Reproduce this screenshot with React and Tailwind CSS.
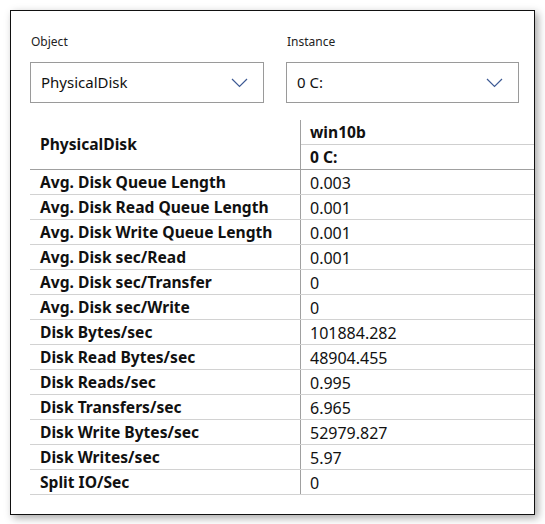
import { useState } from 'react';

const rows = [
  ['Avg. Disk Queue Length', '0.003'],
  ['Avg. Disk Read Queue Length', '0.001'],
  ['Avg. Disk Write Queue Length', '0.001'],
  ['Avg. Disk sec/Read', '0.001'],
  ['Avg. Disk sec/Transfer', '0'],
  ['Avg. Disk sec/Write', '0'],
  ['Disk Bytes/sec', '101884.282'],
  ['Disk Read Bytes/sec', '48904.455'],
  ['Disk Reads/sec', '0.995'],
  ['Disk Transfers/sec', '6.965'],
  ['Disk Write Bytes/sec', '52979.827'],
  ['Disk Writes/sec', '5.97'],
  ['Split IO/Sec', '0'],
];

function Chevron() {
  return (
    <svg width="17" height="10" viewBox="0 0 17 10" fill="none">
      <path d="M1 1 L8.5 8.5 L16 1" stroke="#3d5a94" strokeWidth="1.2" />
    </svg>
  );
}

function Picker({ label, value }) {
  return (
    <div className="flex flex-col">
      <div className="h-[22px] pl-px text-[12px] leading-[22px] text-[#222]">{label}</div>
      <div className="mt-[9px] h-[41px] border border-[#9a9a9a] flex items-center justify-between pl-[10px] pr-[15px]">
        <span className="text-[15px] text-[#111]">{value}</span>
        <Chevron />
      </div>
    </div>
  );
}

export default function App() {
  const [obj] = useState('PhysicalDisk');
  const [inst] = useState('0 C:');

  return (
    <div className="w-[545px] h-[524px] bg-white pt-[10px] pl-[10px]" style={{ fontFamily: '"Noto Sans", "Open Sans", sans-serif' }}>
      <div className="w-[525px] h-[505px] border border-[#111] bg-white shadow-[3px_3px_8px_rgba(0,0,0,0.35)] flex flex-col">
        {/* Pickers */}
        <div className="grid grid-cols-[234px_233px] gap-[22px] pl-[19px] pt-[20px]">
          <Picker label="Object" value={obj} />
          <Picker label="Instance" value={inst} />
        </div>

        {/* Counter table */}
        <div className="ml-[19px] mt-[17px]">
          <div className="flex border-b border-[#a0a0a0]">
            <div className="w-[270px] flex items-center pl-[10px] text-[15.6px] font-bold text-[#111]">{obj}</div>
            <div className="flex-1 border-l border-[#a0a0a0]">
              <div className="h-[25px] flex items-center pl-[9px] pt-[2px] border-b border-[#cfcfcf] text-[15.6px] font-bold text-[#111]">win10b</div>
              <div className="h-[24px] flex items-center pl-[9px] pt-[2px] text-[15.6px] font-bold text-[#111]">{inst}</div>
            </div>
          </div>
          {rows.map(([name, val]) => (
            <div key={name} className="flex h-[25px] border-b border-[#d2d2d2]">
              <div className="w-[270px] flex items-center pl-[10px] pt-[2px] text-[15.6px] font-bold text-[#111]">{name}</div>
              <div className="flex-1 flex items-center pl-[9px] pt-[2px] border-l border-[#a0a0a0] text-[16px] text-[#111]">{val}</div>
            </div>
          ))}
        </div>
      </div>
    </div>
  );
}
